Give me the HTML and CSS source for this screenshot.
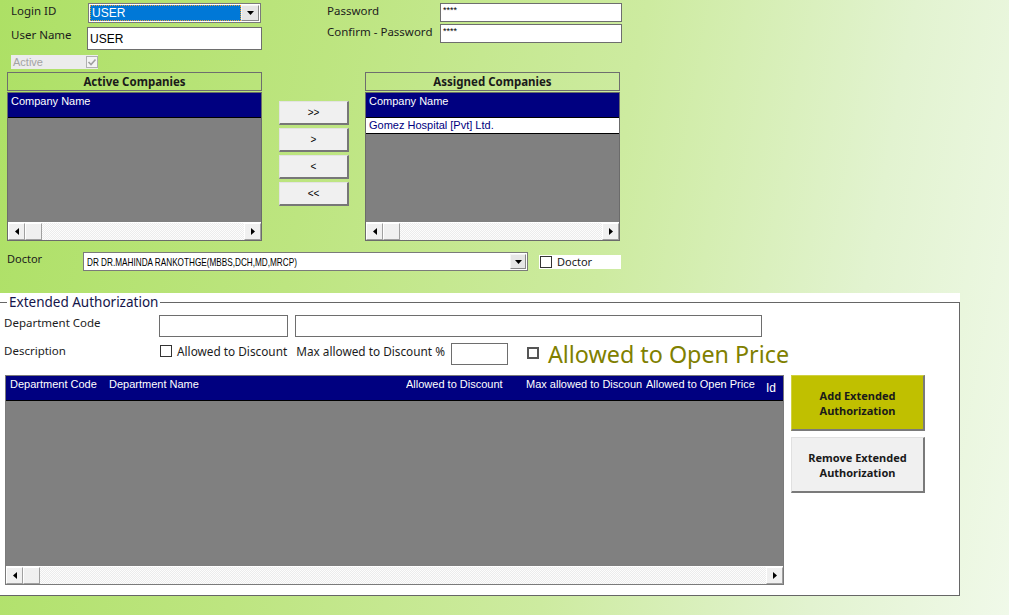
FILE: index.html
```html
<!DOCTYPE html>
<html>
<head>
<meta charset="utf-8">
<link rel="stylesheet" href="styles.css">
</head>
<body>
<div class="page">
  <div class="creds">
    <div class="cred-left">
      <span class="lbl">Login ID</span>
      <div class="combo login-combo">
        <span class="combo-sel"><span class="sel-text">USER</span></span>
        <span class="combo-btn"><svg width="7" height="4" viewBox="0 0 7 4"><path d="M0 0h7L3.5 4z" fill="#000"/></svg></span>
      </div>
      <span class="lbl">User Name</span>
      <div class="txt user-txt">USER</div>
      <div class="active-chk"><span>Active</span><span class="chk chk-dis"><svg width="10" height="10" viewBox="0 0 10 10"><path d="M1.5 5l2.5 2.5 4.5-5" fill="none" stroke="#a0a0a0" stroke-width="1.6"/></svg></span></div>
    </div>
    <div class="cred-right">
      <span class="lbl">Password</span>
      <div class="txt pw">****</div>
      <span class="lbl">Confirm - Password</span>
      <div class="txt pw">****</div>
    </div>
  </div>

  <div class="companies">
    <div class="comp-col">
      <div class="comp-head">Active Companies</div>
      <div class="listbox">
        <div class="lb-head">Company Name</div>
        <div class="lb-body"></div>
        <div class="hscroll">
          <span class="sb-btn"><svg width="4" height="7" viewBox="0 0 4 7"><path d="M4 0v7L0 3.5z"/></svg></span>
          <span class="sb-thumb"></span>
          <span class="sb-track"></span>
          <span class="sb-btn"><svg width="4" height="7" viewBox="0 0 4 7"><path d="M0 0v7l4-3.5z"/></svg></span>
        </div>
      </div>
    </div>
    <div class="move-btns">
      <button class="mv">&gt;&gt;</button>
      <button class="mv">&gt;</button>
      <button class="mv">&lt;</button>
      <button class="mv">&lt;&lt;</button>
    </div>
    <div class="comp-col">
      <div class="comp-head">Assigned Companies</div>
      <div class="listbox">
        <div class="lb-head">Company Name</div>
        <div class="lb-row">Gomez Hospital [Pvt] Ltd.</div>
        <div class="lb-body"></div>
        <div class="hscroll">
          <span class="sb-btn"><svg width="4" height="7" viewBox="0 0 4 7"><path d="M4 0v7L0 3.5z"/></svg></span>
          <span class="sb-thumb"></span>
          <span class="sb-track"></span>
          <span class="sb-btn"><svg width="4" height="7" viewBox="0 0 4 7"><path d="M0 0v7l4-3.5z"/></svg></span>
        </div>
      </div>
    </div>
  </div>

  <div class="doctor-row">
    <span class="lbl doc-lbl">Doctor</span>
    <div class="combo doc-combo">
      <span class="doc-wrap"><span class="doc-text">DR DR.MAHINDA RANKOTHGE(MBBS,DCH,MD,MRCP)</span></span>
      <span class="combo-btn"><svg width="7" height="4" viewBox="0 0 7 4"><path d="M0 0h7L3.5 4z" fill="#000"/></svg></span>
    </div>
    <div class="doc-chk"><span class="chk"></span><span>Doctor</span></div>
  </div>

  <div class="panel">
    <fieldset class="ext">
      <legend>Extended Authorization</legend>
      <div class="ext-row1">
        <span class="lbl ext-lbl">Department Code</span>
        <div class="txt dep-code"></div>
        <div class="txt dep-name"></div>
      </div>
      <div class="ext-row2">
        <span class="lbl ext-lbl">Description</span>
        <span class="chk disc-chk"></span><span class="lbl disc-lbl">Allowed to Discount</span>
        <span class="lbl max-lbl">Max allowed to Discount %</span>
        <div class="txt max-txt"></div>
        <span class="chk open-chk"></span><span class="open-lbl">Allowed to Open Price</span>
      </div>
      <div class="ext-main">
        <div class="grid">
          <div class="grid-head">
            <span class="gc c1">Department Code</span>
            <span class="gc c2">Department Name</span>
            <span class="gc c3">Allowed to Discount</span>
            <span class="gc c4">Max allowed to Discoun</span>
            <span class="gc c5">Allowed to Open Price</span>
            <span class="gc c6">Id</span>
          </div>
          <div class="grid-body"></div>
          <div class="hscroll">
            <span class="sb-btn"><svg width="4" height="7" viewBox="0 0 4 7"><path d="M4 0v7L0 3.5z"/></svg></span>
            <span class="sb-thumb"></span>
            <span class="sb-track"></span>
            <span class="sb-btn"><svg width="4" height="7" viewBox="0 0 4 7"><path d="M0 0v7l4-3.5z"/></svg></span>
          </div>
        </div>
        <div class="ext-btns">
          <button class="big-btn add">Add Extended<br>Authorization</button>
          <button class="big-btn">Remove Extended<br>Authorization</button>
        </div>
      </div>
    </fieldset>
  </div>
</div>
</body>
</html>
```
FILE: styles.css
```css
* { box-sizing: border-box; }
html, body { margin: 0; padding: 0; }
body {
  width: 1009px;
  height: 615px;
  overflow: hidden;
  background: linear-gradient(100deg, #ade065 0%, #bde580 30%, #cdeba0 58%, #e2f3d0 82%, #f0f9e9 100%);
  font-family: "Noto Sans", "Liberation Sans", sans-serif;
  font-size: 12px;
  color: #1a1a1a;
}
.page { width: 1009px; height: 615px; }

.lbl { font-family: "Noto Sans", sans-serif; font-size: 11.5px; line-height: 16px; color: #1c1c1c; white-space: nowrap; }

.txt {
  background: #fff;
  border: 1px solid #6e6e6e;
  font-family: "Liberation Sans", sans-serif;
  font-size: 11px;
  color: #000;
}

/* credentials */
.creds { display: flex; padding: 3px 0 0 11px; height: 69px; }
.cred-left {
  display: grid;
  grid-template-columns: 77px 174px;
  grid-template-rows: 20px 23px 14px;
  row-gap: 4px;
  align-items: center;
  width: 251px;
}
.cred-left .lbl { align-self: start; }
.combo { display: flex; background: #fff; border: 1px solid #7a7a7a; }
.login-combo { height: 20px; width: 173px; padding: 1px; }
.combo-sel { flex: 1; background: #0078d7; outline: 1px dotted #f0a030; outline-offset: -1px; display: flex; align-items: center; padding-left: 2px; }
.sel-text { color: #fff; font-family: "Liberation Sans", sans-serif; font-size: 12px; }
.combo-btn { width: 18px; background: #e6e6e6; border: 1px solid #f5f5f5; border-right-color: #888; border-bottom-color: #888; display: flex; align-items: center; justify-content: center; }
.user-txt { height: 23px; width: 175px; margin-left: -1px; font-size: 12px; padding: 4px 0 0 2px; }
.active-chk {
  grid-column: 1 / 3;
  width: 87px; height: 14px; margin-top: 2px;
  background: #ececec;
  display: flex; align-items: center; justify-content: space-between;
  font-family: "Liberation Sans", sans-serif; font-size: 11px; color: #a3a3a3;
  padding-left: 2px;
}
.chk { display: inline-block; width: 12px; height: 12px; background: #fff; border: 1px solid #333; flex: none; }
.chk-dis { border-color: #b0b0b0; background: #f4f4f4; display: flex; align-items: center; justify-content: center; }

.cred-right {
  margin-left: 65px;
  display: grid;
  grid-template-columns: 113px 182px;
  grid-template-rows: 19px 19px;
  row-gap: 2px;
  align-items: center;
}
.pw { height: 19px; font-size: 9px; padding: 1px 0 0 2px; }
.cred-right .lbl { align-self: start; margin-top: 0; }

/* companies */
.companies { display: flex; padding-left: 7px; margin-top: 3px; }
.comp-col { width: 255px; }
.comp-head {
  height: 19px; border: 1px solid #6e6e6e;
  text-align: center; font-weight: bold; font-size: 11.5px; line-height: 17px;
  color: #1a1a1a;
}
.listbox { margin-top: 1px; height: 149px; border: 1px solid #6b6b6b; display: flex; flex-direction: column; background: #808080; }
.lb-head {
  height: 25px; background: #000080; color: #fff; border-bottom: 1px solid #000;
  font-family: "Liberation Sans", sans-serif; font-size: 11px; padding: 2px 0 0 3px;
}
.lb-row {
  height: 16px; background: #fff; color: #000080; border-bottom: 1px solid #000;
  font-family: "Liberation Sans", sans-serif; font-size: 11px; padding: 1px 0 0 3px;
}
.lb-body { flex: 1; }
.hscroll { height: 18px; display: flex; border-top: 1px solid #fff; background: repeating-conic-gradient(#fdfdfd 0 25%, #ececec 0 50%) 0 0 / 2px 2px; }
.sb-btn, .sb-thumb {
  width: 17px; background: #f0f0f0;
  border: 1px solid #fff; border-right-color: #a0a0a0; border-bottom-color: #a0a0a0;
  display: flex; align-items: center; justify-content: center;
}
.sb-track { flex: 1; }

.move-btns { display: flex; flex-direction: column; gap: 3px; margin: 29px 16px 0 17px; width: 70px; }
.mv {
  height: 24px; width: 70px; margin: 0; padding: 0;
  background: #f0f0f0; border: 1px solid #e3e3e3; border-right: 2px solid #777; border-bottom: 2px solid #777;
  font-family: "Liberation Sans", sans-serif; font-size: 10px; color: #000;
}

/* doctor */
.doctor-row { display: flex; align-items: center; padding-left: 7px; margin-top: 11px; height: 19px; }
.doc-lbl { width: 76px; font-size: 11px; align-self: start; margin-top: -1px; }
.doc-combo { width: 445px; height: 19px; align-items: center; padding: 1px 1px 1px 3px; }
.doc-wrap { flex: 1; overflow: hidden; }
.doc-text { display: inline-block; font-family: "Liberation Sans", sans-serif; font-size: 11px; color: #000; transform: scaleX(0.745); transform-origin: left center; white-space: nowrap; }
.doc-combo .combo-btn { height: 15px; width: 16px; }
.doc-chk { margin-left: 11px; width: 82px; height: 14px; background: #fff; display: flex; align-items: center; gap: 5px; padding-left: 1px; font-size: 11px; }

/* panel */
.panel { margin-top: 22px; width: 960px; height: 303px; background: #fff; padding-top: 1px; }
.ext {
  margin: 0; height: 302px; width: 960px;
  border: 1px solid #666; border-left: none;
  padding: 0 0 0 4px;
}
.ext legend {
  margin-left: 3px; padding: 0 2px;
  font-size: 13.5px; line-height: 17px; color: #14144a;
}
.ext-row1 { display: flex; align-items: center; margin-top: 4px; height: 22px; }
.ext-lbl { width: 155px; align-self: start; }
.dep-code { width: 129px; height: 22px; }
.dep-name { width: 467px; height: 22px; margin-left: 7px; }
.ext-row2 { display: flex; align-items: center; margin-top: 6px; height: 22px; }
.disc-chk { margin-left: 1px; align-self: start; margin-top: 2px; }
.disc-lbl { margin-left: 5px; font-size: 11.8px; align-self: start; }
.max-lbl { margin-left: 9px; font-size: 11.8px; align-self: start; }
.max-txt { width: 57px; height: 22px; margin-left: 6px; }
.open-chk { margin-left: 19px; border: 2px solid #555; margin-top: -2px; }
.open-lbl { margin-left: 9px; font-size: 23.3px; color: #808000; white-space: nowrap; line-height: 26px; }

.ext-main { display: flex; margin-top: 10px; }
.grid { margin-left: 1px; width: 779px; height: 210px; border: 1px solid #7a7a7a; background: #808080; display: flex; flex-direction: column; }
.grid-head { height: 25px; background: #000080; display: flex; padding-left: 4px; border-bottom: 1px solid #000; }
.gc { color: #fff; font-family: "Liberation Sans", sans-serif; font-size: 11px; padding-top: 2px; white-space: nowrap; overflow: hidden; }
.c1 { width: 99px; }
.c2 { width: 297px; }
.c3 { width: 120px; }
.c4 { width: 120px; }
.c5 { width: 120px; }
.c6 { padding-top: 5px; font-size: 12px; }
.grid-body { flex: 1; }

.ext-btns { display: flex; flex-direction: column; gap: 6px; margin-left: 7px; }
.big-btn {
  width: 134px; height: 56px; margin: 0; padding: 0;
  background: #f0f0f0; border: 1px solid #e0e0e0; border-right: 2px solid #7a7a7a; border-bottom: 2px solid #7a7a7a;
  font-family: "Noto Sans", sans-serif; font-weight: bold; font-size: 11px; line-height: 15px; color: #1a1a1a;
}
.big-btn.add { background: #c0c000; border-top-color: #d0d040; border-left-color: #d0d040; }
```
